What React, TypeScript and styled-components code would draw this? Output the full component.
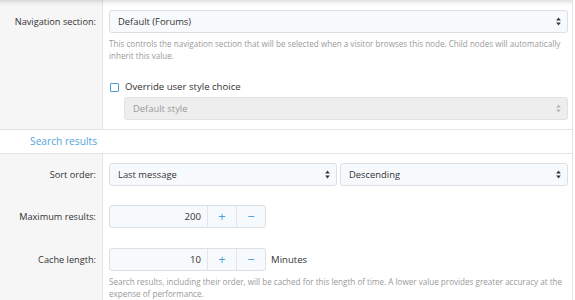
import styled, { createGlobalStyle } from 'styled-components';

const GlobalStyle = createGlobalStyle`
  html, body { margin: 0; padding: 0; background: #fff; }
  body { font-family: "Open Sans", "Noto Sans", sans-serif; color: #222; }
`;

const Arrows = ({ faded }: { faded?: boolean }) => (
    <svg width="5" height="9" viewBox="0 0 5 9">
        <path d="M2.5 0.5 L4.8 3.6 L0.2 3.6 Z" fill={faded ? '#b5b5b5' : '#333'} />
        <path d="M2.5 8.5 L4.8 5.4 L0.2 5.4 Z" fill={faded ? '#b5b5b5' : '#333'} />
    </svg>
);

const App = () => {
    return (
        <Page>
            <GlobalStyle />
            <Shadow />
            <Row divided>
                <Label>Navigation section:</Label>
                <Field>
                    <Select>
                        <span>Default (Forums)</span>
                        <Arrows />
                    </Select>
                    <Hint>
                        This controls the navigation section that will be selected when a visitor browses this node. Child nodes will automatically inherit this value.
                    </Hint>
                    <CheckLine>
                        <CheckBox />
                        <span>Override user style choice</span>
                    </CheckLine>
                    <Select disabled indent>
                        <span>Default style</span>
                        <Arrows faded />
                    </Select>
                </Field>
            </Row>

            <Header>
                <HeaderTitle>Search results</HeaderTitle>
            </Header>

            <Row top={9}>
                <Label>Sort order:</Label>
                <Field>
                    <Pair>
                        <Select grow>
                            <span>Last message</span>
                            <Arrows />
                        </Select>
                        <Select grow>
                            <span>Descending</span>
                            <Arrows />
                        </Select>
                    </Pair>
                </Field>
            </Row>

            <Row top={19}>
                <Label>Maximum results:</Label>
                <Field>
                    <Inline>
                        <Spinner>
                            <SpinValue>200</SpinValue>
                            <SpinButton>+</SpinButton>
                            <SpinButton>−</SpinButton>
                        </Spinner>
                    </Inline>
                </Field>
            </Row>

            <Row top={20}>
                <Label>Cache length:</Label>
                <Field>
                    <Inline>
                        <Spinner>
                            <SpinValue>10</SpinValue>
                            <SpinButton>+</SpinButton>
                            <SpinButton>−</SpinButton>
                        </Spinner>
                        <Unit>Minutes</Unit>
                    </Inline>
                    <Hint>
                        Search results, including their order, will be cached for this length of time. A lower value provides greater accuracy at the expense of performance.
                    </Hint>
                </Field>
            </Row>
        </Page>
    );
};

const Page = styled.div`
  position: relative;
  width: 572px;
  height: 300px;
  overflow: hidden;
  border-right: 1px solid #e2e2e2;
`;

const Shadow = styled.div`
  position: absolute;
  left: 0; right: 0; top: 0;
  height: 6px;
  background: linear-gradient(180deg, rgba(0,0,0,0.13) 0%, rgba(0,0,0,0.04) 50%, rgba(0,0,0,0) 100%);
  pointer-events: none;
`;

const Row = styled.div<{ divided?: boolean; top?: number }>`
  display: grid;
  grid-template-columns: 103px 1fr;
  --top: ${(p) => p.top ?? 10}px;
  --bottom: ${(p) => (p.divided ? '9px' : '0px')};
  border-bottom: ${(p) => (p.divided ? '1px solid #e4e4e4' : 'none')};
`;

const Label = styled.div`
  background: #f6f6f6;
  border-right: 1px solid #e4e4e4;
  padding: var(--top) 6px 0 0;
  text-align: right;
  font-size: 9.2px;
  line-height: 23px;
  color: #333;
`;

const Field = styled.div`
  padding: var(--top) 4px var(--bottom) 6px;
  display: flex;
  flex-direction: column;
  min-width: 0;
`;

const Select = styled.div<{ disabled?: boolean; indent?: boolean; grow?: boolean }>`
  height: 23px;
  flex: ${(p) => (p.grow ? '1 1 0' : '0 0 auto')};
  box-sizing: border-box;
  display: flex;
  align-items: center;
  justify-content: space-between;
  padding: 0 6px 0 8px;
  margin-left: ${(p) => (p.indent ? '15px' : '0')};
  margin-top: ${(p) => (p.indent ? '4px' : '0')};
  border: 1px solid ${(p) => (p.disabled ? '#e2e2e2' : '#dcdfe3')};
  border-radius: 3px;
  background: ${(p) => (p.disabled ? '#eeeeee' : '#f7fafd')};
  color: ${(p) => (p.disabled ? '#999' : '#333')};
  font-size: 9.4px;
`;

const Hint = styled.div`
  margin-top: 5px;
  font-size: 8.1px;
  line-height: 12px;
  color: #9a9a9a;
`;

const CheckLine = styled.label`
  display: flex;
  align-items: center;
  gap: 6px;
  margin-top: 19px;
  font-size: 9.6px;
  line-height: 12px;
  color: #333;
`;

const CheckBox = styled.span`
  display: block;
  width: 9px;
  height: 9px;
  box-sizing: border-box;
  margin-left: 1px;
  border: 1px solid #4a9fd8;
  border-radius: 1px;
  background: #fff;
`;

const Header = styled.div`
  display: grid;
  grid-template-columns: 103px 1fr;
  height: 23px;
  border-bottom: 1px solid #e4e4e4;
  background: #fff;
`;

const HeaderTitle = styled.div`
  text-align: right;
  padding-right: 6px;
  font-size: 10.2px;
  line-height: 23px;
  color: #54a5dc;
`;

const Pair = styled.div`
  display: flex;
  gap: 3px;
`;

const Inline = styled.div`
  display: flex;
  align-items: center;
  gap: 5px;
`;

const Spinner = styled.div`
  display: flex;
  width: 157px;
  height: 23px;
  box-sizing: border-box;
  border: 1px solid #dcdfe3;
  border-radius: 3px;
  background: #f7fafd;
`;

const SpinValue = styled.div`
  width: 97px;
  padding-right: 6px;
  box-sizing: border-box;
  text-align: right;
  font-size: 9.6px;
  line-height: 21px;
  color: #333;
`;

const SpinButton = styled.div`
  flex: 1;
  border-left: 1px solid #e2e5e9;
  text-align: center;
  font-size: 13px;
  line-height: 20px;
  color: #4a9fd8;
`;

const Unit = styled.span`
  font-size: 9.6px;
  color: #333;
`;

export default App;
